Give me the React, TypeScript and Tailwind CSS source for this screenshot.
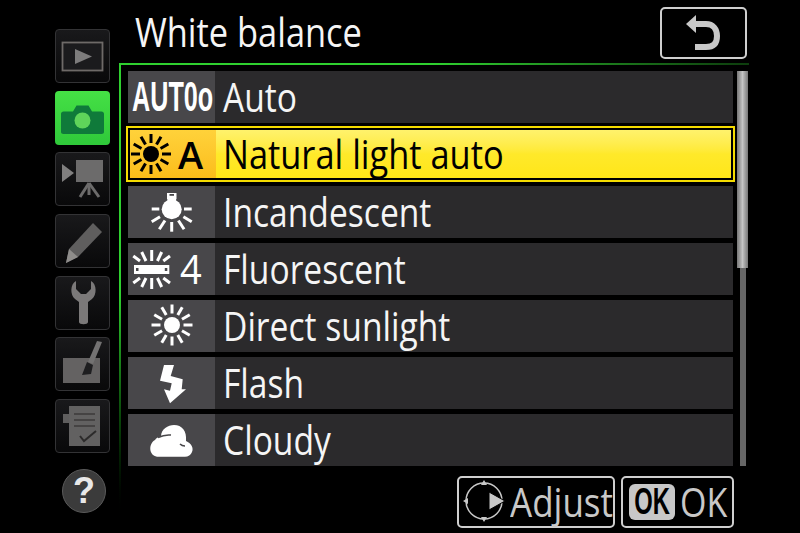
const font = "font-['Open_Sans','Noto_Sans',sans-serif]";

function Rays({ cx, cy, inner, outer, color, width }: { cx: number; cy: number; inner: number; outer: number; color: string; width: number }) {
  const rays = Array.from({ length: 12 }, (_, i) => (i * Math.PI) / 6);
  return (
    <g stroke={color} strokeWidth={width}>
      {rays.map((a) => (
        <line
          key={a}
          x1={cx + Math.cos(a) * inner}
          y1={cy + Math.sin(a) * inner}
          x2={cx + Math.cos(a) * outer}
          y2={cy + Math.sin(a) * outer}
        />
      ))}
    </g>
  );
}

function SunIcon() {
  return (
    <svg width="87" height="52" viewBox="0 0 87 52">
      <circle cx="44" cy="25" r="8" fill="#fff" />
      <Rays cx={44} cy={25} inner={11.5} outer={20.5} color="#fff" width={3} />
    </svg>
  );
}

function BulbIcon() {
  return (
    <svg width="87" height="52" viewBox="0 0 87 52">
      <path d="M39 7h9.500v5.500l-1 3h-7.500l-1-3z" fill="#fff" />
      <rect x="41.500" y="8" width="4.500" height="1.800" fill="#48474a" />
      <circle cx="43.700" cy="23.300" r="10" fill="#fff" />
      <g stroke="#fff" strokeWidth="3">
        <line x1="23.700" y1="23" x2="31.300" y2="23" />
        <line x1="56" y1="23" x2="63.700" y2="23" />
        <line x1="23.700" y1="35.700" x2="32" y2="30.700" />
        <line x1="63.700" y1="35.700" x2="55.400" y2="30.700" />
        <line x1="31.300" y1="43.300" x2="37" y2="34.500" />
        <line x1="56.100" y1="43.300" x2="50.400" y2="34.500" />
        <line x1="43.700" y1="36" x2="43.700" y2="45.700" />
      </g>
    </svg>
  );
}

function FluorescentIcon() {
  return (
    <svg width="44" height="52" viewBox="0 0 44 52">
      <rect x="6" y="22" width="35.300" height="9" fill="#fff" />
      <rect x="8" y="25" width="2.500" height="3" fill="#48474a" />
      <rect x="36.800" y="25" width="2.500" height="3" fill="#48474a" />
      <g stroke="#fff" strokeWidth="3">
        <line x1="23.700" y1="7" x2="23.700" y2="18" />
        <line x1="13.700" y1="9" x2="18" y2="18" />
        <line x1="33.700" y1="9" x2="29.400" y2="18" />
        <line x1="5.300" y1="13" x2="12" y2="18" />
        <line x1="42" y1="13" x2="35.300" y2="18" />
        <line x1="23.700" y1="35" x2="23.700" y2="46" />
        <line x1="13.700" y1="44" x2="18" y2="35" />
        <line x1="33.700" y1="44" x2="29.400" y2="35" />
        <line x1="5.300" y1="40" x2="12" y2="35" />
        <line x1="42" y1="40" x2="35.300" y2="35" />
      </g>
    </svg>
  );
}

function FlashIcon() {
  return (
    <svg width="87" height="52" viewBox="0 0 87 52">
      <path
        d="M36 8H46L42.700 19L54.700 22.300L53.700 32.300H58L42 46.300L36 32.300L42 33.700L43.700 26.300L32 23.700Z"
        fill="#fff"
      />
    </svg>
  );
}

function CloudIcon() {
  return (
    <svg width="87" height="52" viewBox="0 0 87 52">
      <path
        d="M29 42.700C21 41.500 20 30 27 26C28 24 30 23 33 22.500C33 15 40 11 46 11C54 11 59 17 58 27C63 29 66 34 64 38C63 41 60 42.700 57 42.700Z"
        fill="#fff"
      />
      <path d="M30 23.500C34 21.500 38 20.500 43 21M52 30C53 31 55 32 57 32" fill="none" stroke="#48474a" strokeWidth="1.500" />
    </svg>
  );
}

function PlayIcon() {
  return (
    <svg width="55" height="54" viewBox="0 0 55 54">
      <rect x="7.500" y="13.500" width="40" height="28" fill="#1b1b1d" stroke="#6e6a68" strokeWidth="1.800" />
      <path d="M20 20L37 27.500L20 35Z" fill="#7d7c7c" />
    </svg>
  );
}

function CameraIcon() {
  return (
    <svg width="55" height="54" viewBox="0 0 55 54">
      <path
        d="M6 23c0-1.500 1-2.500 2.500-2.500H18l3.500-6h12l3.500 6h9.500c1.500 0 2.500 1 2.500 2.500v18c0 1-1 2-2.500 2H8.500C7 43 6 42 6 41Z"
        fill="#0f7a3a"
      />
      <circle cx="27.500" cy="29.500" r="8" fill="#5fd45a" />
    </svg>
  );
}

function MovieIcon() {
  return (
    <svg width="55" height="54" viewBox="0 0 55 54">
      <path d="M7 12L19 21L7 30Z" fill="#807f7f" />
      <rect x="21" y="8" width="27" height="22" fill="#6c6b6b" />
      <g stroke="#6c6b6b" strokeWidth="3">
        <line x1="34" y1="31" x2="25" y2="45" />
        <line x1="34" y1="31" x2="34" y2="43" />
        <line x1="34" y1="31" x2="44" y2="45" />
      </g>
    </svg>
  );
}

function PencilIcon() {
  return (
    <svg width="55" height="54" viewBox="0 0 55 54">
      <path d="M11 49L14 35L38 9L47 18L23 43Z" fill="#5f5e5e" />
      <path d="M11 49L14 35L23 43Z" fill="#8f8d8b" />
    </svg>
  );
}

function WrenchIcon() {
  return (
    <svg width="55" height="54" viewBox="0 0 55 54">
      <path
        d="M21 5C15 8 15 19 20 23L24 26V46C24 49 33 49 33 46V26L37 23C42 19 42 8 36 5V13L31 18H26L21 13Z"
        fill="#7b7979"
      />
    </svg>
  );
}

function RetouchIcon() {
  return (
    <svg width="55" height="54" viewBox="0 0 55 54">
      <rect x="8" y="21" width="37" height="25" fill="#646262" />
      <path d="M42 4L47 5L38 27L33 25Z" fill="#737272" />
      <path d="M32 25L38 28L36 37L27 38Z" fill="#1e1e20" />
    </svg>
  );
}

function RecentIcon() {
  return (
    <svg width="55" height="54" viewBox="0 0 55 54">
      <rect x="8" y="15" width="8" height="9" fill="#5f5e5e" />
      <rect x="14" y="7" width="31" height="40" fill="#626161" />
      <g stroke="#3d3a3a" strokeWidth="1.500">
        <line x1="19" y1="15" x2="40" y2="15" />
        <line x1="19" y1="21" x2="40" y2="21" />
        <line x1="19" y1="27" x2="40" y2="27" />
      </g>
      <path d="M25 37L29 42L41 32" fill="none" stroke="#2c2b2b" strokeWidth="2" />
    </svg>
  );
}

const tabs = [
  { id: 'play', icon: <PlayIcon /> },
  { id: 'photo', icon: <CameraIcon />, active: true },
  { id: 'movie', icon: <MovieIcon /> },
  { id: 'custom', icon: <PencilIcon /> },
  { id: 'setup', icon: <WrenchIcon /> },
  { id: 'retouch', icon: <RetouchIcon /> },
  { id: 'recent', icon: <RecentIcon /> },
];

function Row({ icon, label }: { icon: React.ReactNode; label: string }) {
  return (
    <div className="flex h-[52px] w-[605px] bg-[#2b2a2c]">
      <div className="flex w-[87px] shrink-0 items-center bg-[#48474a]">{icon}</div>
      <span className="inline-block origin-left translate-x-[8px] scale-x-[0.84] whitespace-nowrap text-[40px] leading-[52px] text-[#f5f5f5]">
        {label}
      </span>
    </div>
  );
}

export default function App() {
  return (
    <div className={`flex h-[533px] w-[800px] overflow-hidden bg-black ${font}`}>
      {/* Menu tabs */}
      <aside className="flex w-[119px] shrink-0 flex-col gap-[7.700px] pl-[55px] pt-[29px]">
        {tabs.map((tab) => (
          <div
            key={tab.id}
            className={
              tab.active
                ? 'h-[54px] w-[55px] rounded-[4px] bg-gradient-to-b from-[#45e045] to-[#2fc93a]'
                : 'h-[54px] w-[55px] rounded-[4px] border border-[#333335] bg-gradient-to-b from-[#19191b] to-[#09090a]'
            }
          >
            <div className={tab.active ? '' : '-m-px'}>{tab.icon}</div>
          </div>
        ))}
        <div className="ml-[7px] mt-[8px] flex h-[44px] w-[44px] items-center justify-center rounded-full border border-[#5a5a5a] bg-[#3b3b3b] font-['Liberation_Sans',sans-serif] text-[36px] font-bold text-[#e8e8e8]">
          ?
        </div>
      </aside>

      <main className="flex w-[681px] shrink-0 flex-col">
        {/* Title */}
        <header className="flex h-[63px] items-start justify-between pl-[16px] pr-[53px] pt-[7px]">
          <h1 className="origin-left scale-x-[0.86] whitespace-nowrap text-[40px] leading-[50px] text-[#f5f5f5]">
            White balance
          </h1>
          <div className="h-[52px] w-[87px] rounded-[5px] border-2 border-[#cfcfcf]">
            <svg width="83" height="48" viewBox="0 0 83 48">
              <path d="M24 15L34 6V24Z" fill="#c8c8c8" />
              <path d="M32 15H44C51 15 55 20 55 27C55 35 51 38 44 38H33" fill="none" stroke="#c8c8c8" strokeWidth="6" />
            </svg>
          </div>
        </header>
        <div className="h-[2px] w-[630px] bg-gradient-to-r from-[#2fd02f] via-[#2fd02f] to-[#0d3d0d]" />

        <div className="flex">
          <div className="h-[458px] w-[2px] shrink-0 bg-gradient-to-b from-[#2fd02f] via-[#2fd02f] to-black" />
          <div className="flex flex-col pl-[7px] pt-[6px]">
            <div className="flex gap-[4px]">
              {/* Options */}
              <div className="flex w-[605px] flex-col gap-[5px]">
                <Row
                  label="Auto"
                  icon={
                    <span className="block w-full origin-left translate-x-[4px] scale-x-[0.6] whitespace-nowrap font-['Liberation_Sans',sans-serif] text-[42px] font-bold leading-[52px] text-white">
                      AUT0o
                    </span>
                  }
                />
                <div className="-mx-[2px] -mb-[1px] -mt-[2px] h-[56px] border-2 border-[#f5dc00]">
                  <div className="flex h-full border-2 border-black">
                    <div className="flex w-[86px] shrink-0 items-center bg-gradient-to-b from-[#ffd23a] to-[#fbbd18]">
                      <svg width="48" height="48" viewBox="0 0 48 48" className="shrink-0">
                        <circle cx="21" cy="24" r="8" fill="#000" />
                        <Rays cx={21} cy={24} inner={11} outer={20} color="#000" width={3} />
                      </svg>
                      <span className="text-[38px] font-semibold leading-[48px] text-black">A</span>
                    </div>
                    <div className="flex-1 bg-gradient-to-b from-[#fff26c] via-[#ffe92a] to-[#ffe617] pl-[7px]">
                      <span className="inline-block origin-left scale-x-[0.86] whitespace-nowrap text-[40px] leading-[48px] text-black">
                        Natural light auto
                      </span>
                    </div>
                  </div>
                </div>
                <Row label="Incandescent" icon={<BulbIcon />} />
                <Row
                  label="Fluorescent"
                  icon={
                    <>
                      <FluorescentIcon />
                      <span className="inline-block origin-left translate-x-[8px] scale-x-[0.95] text-[40px] leading-[52px] text-white">
                        4
                      </span>
                    </>
                  }
                />
                <Row label="Direct sunlight" icon={<SunIcon />} />
                <Row label="Flash" icon={<FlashIcon />} />
                <Row label="Cloudy" icon={<CloudIcon />} />
              </div>

              {/* Scrollbar */}
              <div className="flex w-[11px] flex-col items-center">
                <div className="h-[197px] w-[11px] bg-gradient-to-r from-[#777] via-[#c4c4c4] to-[#777]" />
                <div className="h-[198px] w-[6px] bg-[#666]" />
              </div>
            </div>

            {/* Footer buttons */}
            <div className="flex gap-[6px] pl-[329px] pt-[10px] text-[40px] leading-[48px] text-[#c8c8c8]">
              <div className="flex h-[52px] w-[158px] items-center rounded-[5px] border-2 border-[#cfcfcf]">
                <svg width="51" height="48" viewBox="0 0 51 48" className="shrink-0">
                  <circle cx="25" cy="23" r="18" fill="none" stroke="#c8c8c8" strokeWidth="1.500" />
                  <path d="M30 14L46 23L30 32Z" fill="#c8c8c8" stroke="#000" strokeWidth="1" />
                  <path d="M25 2L22 7H28ZM25 44L22 39H28ZM4 23L9 20V26Z" fill="#c8c8c8" />
                </svg>
                <span className="inline-block origin-left scale-x-[0.875] whitespace-nowrap">Adjust</span>
              </div>
              <div className="flex h-[52px] w-[113px] items-center rounded-[5px] border-2 border-[#cfcfcf] pl-[6px]">
                <span className="flex h-[36px] w-[46px] shrink-0 items-center justify-center rounded-[6px] bg-[#c8c8c8] font-['Liberation_Sans',sans-serif] text-[36px] font-bold text-black">
                  <span className="block scale-x-[0.66]">OK</span>
                </span>
                <span className="inline-block origin-left translate-x-[5px] scale-x-[0.85]">OK</span>
              </div>
            </div>
          </div>
        </div>
      </main>
    </div>
  );
}
